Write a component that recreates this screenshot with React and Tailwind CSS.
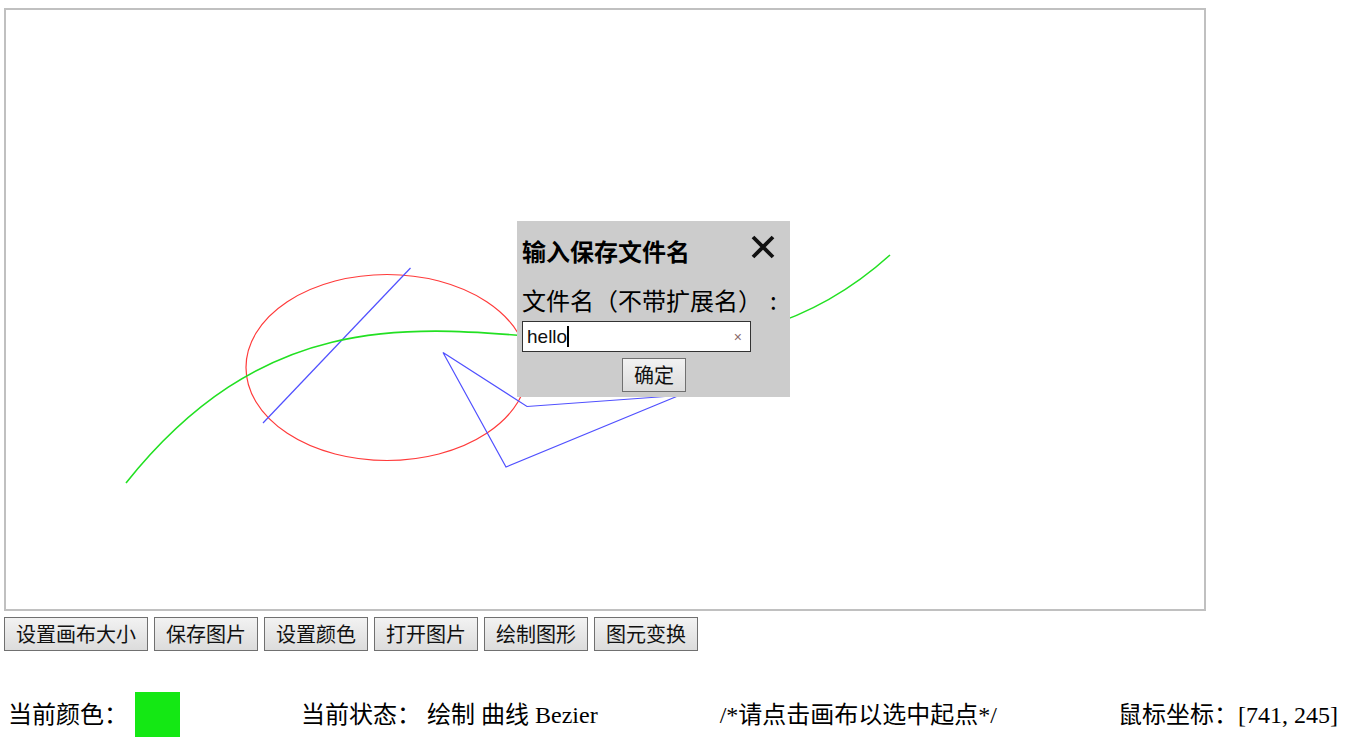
const TOOL_BUTTONS = ['设置画布大小', '保存图片', '设置颜色', '打开图片', '绘制图形', '图元变换'];

function Drawing() {
  // viewBox is shifted so shapes use page coordinates
  return (
    <svg width="1198" height="599" viewBox="6 10 1198 599" className="block">
      <ellipse cx="387" cy="367.5" rx="141" ry="93" fill="none" stroke="#ff3a3a" strokeWidth="1.2" />
      <line x1="263" y1="423" x2="410.5" y2="268" stroke="#5050ff" strokeWidth="1.2" />
      <path
        d="M126 483 C 376 170, 645 476, 890 255"
        fill="none"
        stroke="#22e022"
        strokeWidth="1.6"
      />
      <polygon
        points="443,352.5 527,406.5 679,395.5 506,467"
        fill="none"
        stroke="#5050ff"
        strokeWidth="1.2"
      />
    </svg>
  );
}

function SaveDialog() {
  return (
    <div className="absolute left-[511px] top-[211px] w-[273px] h-[176px] bg-[#cccccc] flex flex-col px-[5px] font-['Noto_Sans_CJK_SC',sans-serif] text-black">
      <div className="flex items-center justify-between pt-[18px] h-[42px]">
        <span className="text-[24px] leading-[24px] font-bold">输入保存文件名</span>
        <svg width="26" height="24" viewBox="0 0 26 24" className="mr-[9px] -mt-[8px]">
          <path d="M3 2 L23 22 M23 2 L3 22" stroke="#111" strokeWidth="3.8" />
        </svg>
      </div>
      <div className="mt-[25px] text-[24px] leading-[24px] flex">
        <span>文件名（不带扩展名）</span>
        <span className="pl-[8px]">:</span>
      </div>
      <div className="mt-[9px] w-[229px] h-[31px] border border-[#333] bg-white flex items-center pl-[4px] pr-[8px]">
        <span className="font-['Liberation_Sans',sans-serif] text-[19px] leading-[22px] text-[#111]">hello</span>
        <span className="w-[2px] h-[21px] bg-black" />
        <span className="ml-auto text-[14px] leading-none text-[#8a6a6a] font-['Liberation_Sans',sans-serif]">×</span>
      </div>
      <div className="flex justify-center mt-[6px] pl-[1px]">
        <button className="h-[34px] px-[11px] border border-[#707070] bg-gradient-to-b from-[#f2f2f2] to-[#dcdcdc] text-[20px] leading-[24px] text-[#111]">
          确定
        </button>
      </div>
    </div>
  );
}

export default function App() {
  return (
    <div className="w-[1352px] h-[747px] bg-white pt-[8px] pl-[4px] overflow-hidden">
      {/* canvas */}
      <div className="relative w-[1202px] h-[603px] border-2 border-[#c0c0c0] bg-white">
        <Drawing />
        <SaveDialog />
      </div>

      {/* toolbar */}
      <div className="flex gap-[6px] mt-[6px] font-['Noto_Sans_CJK_SC',sans-serif]">
        {TOOL_BUTTONS.map((label) => (
          <button
            key={label}
            className="h-[34px] px-[11px] border border-[#707070] bg-gradient-to-b from-[#f2f2f2] to-[#dcdcdc] text-[20px] leading-[24px] text-[#111]"
          >
            {label}
          </button>
        ))}
      </div>

      {/* status bar */}
      <div className="flex items-center mt-[41px] pl-[4px] text-[24px] leading-[28px] text-black font-['Liberation_Serif','Noto_Sans_CJK_SC',serif] whitespace-pre">
        <span>当前颜色：</span>
        <span className="ml-[7px] w-[45px] h-[45px] bg-[#14e814]" />
        <span className="ml-[121px]">当前状态：{' '}绘制 曲线 Bezier</span>
        <span className="ml-[122px]">/*请点击画布以选中起点*/</span>
        <span className="ml-[121px]">鼠标坐标：[741, 245]</span>
      </div>
    </div>
  );
}
